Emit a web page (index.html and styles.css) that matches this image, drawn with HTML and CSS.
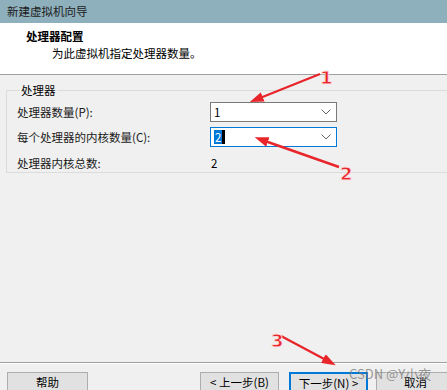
FILE: index.html
```html
<!DOCTYPE html>
<html>
<head>
    <meta charset="utf-8">
    <title>新建虚拟机向导</title>
    <link rel="stylesheet" href="styles.css">
</head>
<body>
    <div class="dialog">
        <div class="titlebar">新建虚拟机向导</div>

        <div class="header">
            <div class="header-title">处理器配置</div>
            <div class="header-sub">为此虚拟机指定处理器数量。</div>
        </div>

        <div class="main">
            <fieldset class="group">
                <legend>处理器</legend>
                <div class="row">
                    <span class="label">处理器数量(P):</span>
                    <div class="combo">
                        <span class="value">1</span>
                        <svg class="chevron" width="10" height="6" viewBox="0 0 10 6"><polyline points="0.5,0.5 5,5 9.5,0.5" fill="none" stroke="#666" stroke-width="1"/></svg>
                    </div>
                </div>
                <div class="row">
                    <span class="label">每个处理器的内核数量(C):</span>
                    <div class="combo focused">
                        <span class="value"><span class="selected">2</span><span class="caret"></span></span>
                        <svg class="chevron" width="10" height="6" viewBox="0 0 10 6"><polyline points="0.5,0.5 5,5 9.5,0.5" fill="none" stroke="#666" stroke-width="1"/></svg>
                    </div>
                </div>
                <div class="row">
                    <span class="label">处理器内核总数:</span>
                    <span class="total">2</span>
                </div>
            </fieldset>
        </div>

        <div class="footer">
            <button class="btn">帮助</button>
            <button class="btn btn-back">&lt; 上一步(B)</button>
            <button class="btn btn-default">下一步(N) &gt;</button>
            <button class="btn">取消</button>
        </div>
    </div>

    <!-- red annotation arrows drawn over the dialog -->
    <svg class="marks" width="447" height="390" viewBox="0 0 447 390">
        <defs>
            <marker id="head" markerWidth="14" markerHeight="10" refX="3" refY="5" orient="auto" markerUnits="userSpaceOnUse">
                <path d="M0,0 L14,5 L0,10 Z" fill="#e8252b"/>
            </marker>
        </defs>
        <line x1="320" y1="74" x2="260" y2="98" stroke="#e8252b" stroke-width="2.4" marker-end="url(#head)"/>
        <line x1="339" y1="167" x2="265" y2="141" stroke="#e8252b" stroke-width="2.4" marker-end="url(#head)"/>
        <line x1="281" y1="336" x2="326" y2="360" stroke="#e8252b" stroke-width="2.4" marker-end="url(#head)"/>
        <text x="320" y="84" class="num">1</text>
        <text x="340" y="180" class="num">2</text>
        <text x="271" y="347" class="num">3</text>
    </svg>

    <div class="watermark">CSDN @Y小夜</div>
</body>
</html>
```

FILE: styles.css
```css
html, body {
    margin: 0;
    padding: 0;
    width: 447px;
    height: 390px;
    overflow: hidden;
    background: #f0f0f0;
}
body {
    position: relative;
    font-family: "Noto Sans CJK SC", "Noto Sans", sans-serif;
    font-size: 11.5px;
    color: #000;
}
.dialog {
    width: 470px;
    height: 394px;
    display: flex;
    flex-direction: column;
    background: #f0f0f0;
}
.titlebar {
    height: 23px;
    line-height: 22px;
    padding-left: 7px;
    background: #8eafbc;
    color: #1b1b1b;
}
.header {
    height: 52px;
    background: #fff;
    border-bottom: 1px solid #a0a0a0;
    padding: 5px 0 0 26px;
    box-sizing: border-box;
}
.header-title {
    font-weight: bold;
    line-height: 17px;
}
.header-sub {
    padding-left: 26px;
    line-height: 16px;
}
.main {
    flex: 1;
    padding: 8px 0 0 6px;
}
.group {
    margin: 0;
    padding: 2px 0 6px 10px;
    border: 1px solid #dcdcdc;
    border-right: none;
    height: 90px;
    box-sizing: border-box;
}
.group legend {
    padding: 0 1px;
    margin-left: 3px;
    line-height: 14px;
}
.row {
    display: flex;
    align-items: center;
    height: 25.5px;
}
.label {
    width: 193px;
    color: #1a1a1a;
}
.combo {
    width: 127px;
    height: 20px;
    box-sizing: border-box;
    border: 1px solid #7a7a7a;
    background: #fff;
    display: flex;
    align-items: center;
    justify-content: space-between;
    padding: 0 5px 0 3px;
}
.combo.focused {
    border-color: #0078d7;
}
.value {
    display: flex;
    align-items: center;
    line-height: 14px;
}
.selected {
    background: #0078d7;
    color: #fff;
    padding: 0 1px;
}
.caret {
    display: inline-block;
    width: 3px;
    height: 14px;
    background: #000;
}
.total {
    padding-left: 1px;
}
.footer {
    height: 32px;
    border-top: 1px solid #a0a0a0;
    box-shadow: inset 0 1px 0 #fff;
    display: flex;
    align-items: flex-start;
    padding: 9px 0 0 7px;
    box-sizing: border-box;
}
.btn {
    font-family: inherit;
    font-size: 11.5px;
    line-height: 18px;
    width: 79px;
    height: 23px;
    padding: 0 0 3px;
    background: #e1e1e1;
    border: 1px solid #adadad;
    color: #000;
}
.footer .btn:first-child {
    width: 81px;
}
.btn-back {
    margin-left: 112px;
}
.btn-default {
    margin-left: 10px;
    border: 2px solid #0078d7;
}
.btn-default + .btn {
    margin-left: 8px;
}
.marks {
    position: absolute;
    left: 0;
    top: 0;
    pointer-events: none;
}
.num {
    font-family: "DejaVu Sans", sans-serif;
    font-weight: bold;
    font-size: 18px;
    fill: #e8252b;
    stroke: #fde0e0;
    stroke-width: 0.8px;
}
.watermark {
    position: absolute;
    left: 349px;
    top: 364px;
    font-size: 13px;
    color: rgba(120, 120, 120, 0.75);
}
```
